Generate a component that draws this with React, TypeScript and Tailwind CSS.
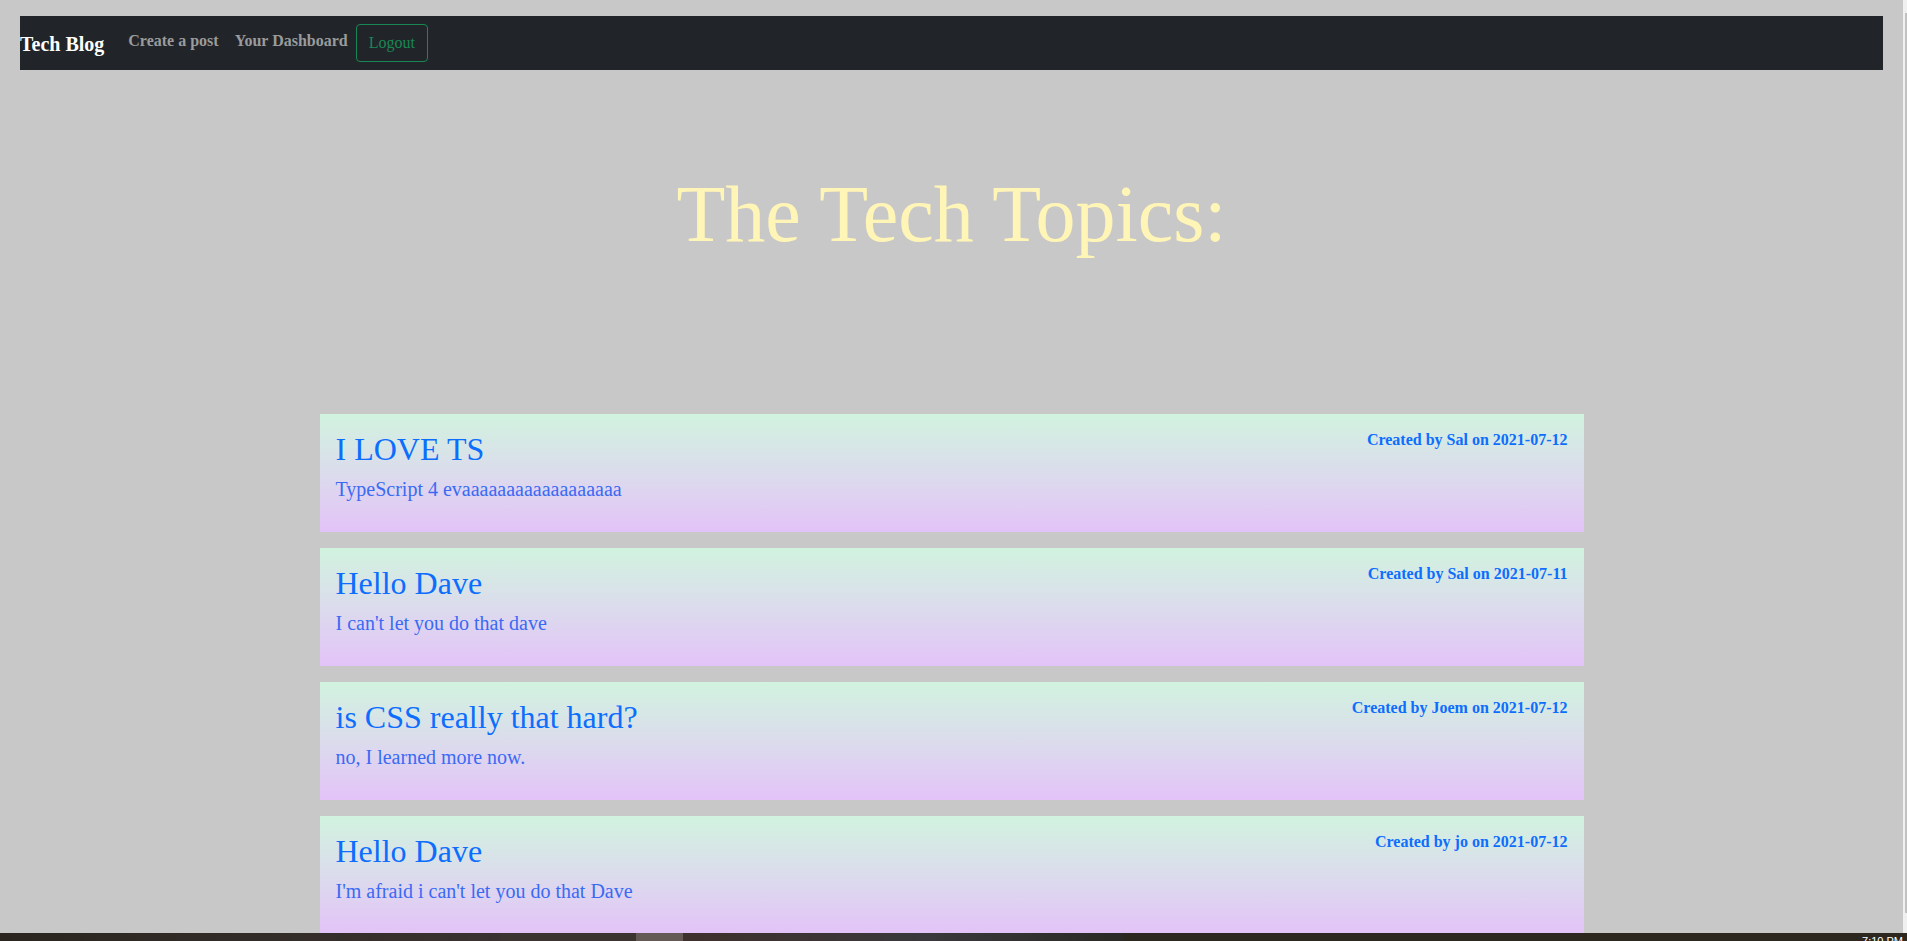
const posts = [
  {
    id: 1,
    title: "I LOVE TS",
    body: "TypeScript 4 evaaaaaaaaaaaaaaaaaa",
    author: "Sal",
    date: "2021-07-12",
  },
  {
    id: 2,
    title: "Hello Dave",
    body: "I can't let you do that dave",
    author: "Sal",
    date: "2021-07-11",
  },
  {
    id: 3,
    title: "is CSS really that hard?",
    body: "no, I learned more now.",
    author: "Joem",
    date: "2021-07-12",
  },
  {
    id: 4,
    title: "Hello Dave",
    body: "I'm afraid i can't let you do that Dave",
    author: "jo",
    date: "2021-07-12",
  },
  {
    id: 5,
    title: "Hello World",
    body: "first post",
    author: "jo",
    date: "2021-07-10",
  },
];

function Navbar() {
  return (
    <nav className="h-[54px] bg-[#212529] flex items-center">
      <a href="#" className="text-[20px] font-bold text-white leading-[30px] mr-4 mt-[1px]">
        Tech Blog
      </a>
      <a href="#" className="px-2 text-base font-bold text-[#9a9b9d] leading-6 -mt-[4px]">
        Create a post
      </a>
      <a href="#" className="px-2 text-base font-bold text-[#9a9b9d] leading-6 -mt-[4px]">
        Your Dashboard
      </a>
      <button className="px-3 py-1.5 text-base leading-6 text-[#198754] border border-[#198754] rounded">
        Logout
      </button>
    </nav>
  );
}

function PostCard({ post }: { post: (typeof posts)[number] }) {
  return (
    <div className="bg-gradient-to-b from-[#d1f3df] to-[#e3c3f8] px-4 pt-4 pb-[28px]">
      <div className="flex justify-between items-start">
        <h2 className="text-[32px] leading-[38px] text-[#0d6efd]">{post.title}</h2>
        <h6 className="text-base font-bold leading-[1.2] text-[#0d6efd]">
          Created by {post.author} on {post.date}
        </h6>
      </div>
      <p className="text-[20px] leading-[30px] text-[#3a6af4] mt-[6px]">{post.body}</p>
    </div>
  );
}

export default function App() {
  return (
    <div className="w-[1907px] h-[941px] flex flex-col overflow-hidden font-['Liberation_Serif',serif]">
      <div className="flex-1 flex min-h-0">
        <main className="w-[1903px] bg-[#c8c8c8] overflow-hidden pt-4 px-5">
          <Navbar />
          <h1 className="text-center text-[80px] leading-[1.2] text-[#fff5b6] mt-[96px]">
            The Tech Topics:
          </h1>
          <div className="w-[1264px] mx-auto mt-[152px] flex flex-col gap-4">
            {posts.map((p) => (
              <PostCard key={p.id} post={p} />
            ))}
          </div>
        </main>
        {/* fake scrollbar strip */}
        <div className="w-[4px] bg-[#f0f0f0] pt-[13px] flex justify-end">
          <div className="w-[2px] h-[900px] bg-[#c1c1c1]" />
        </div>
      </div>
      {/* taskbar edge */}
      <div className="h-[8px] flex bg-[#2c2820] overflow-hidden">
        <div className="w-[500px] bg-gradient-to-r from-[#2a261f] to-[#3a3230]" />
        <div className="w-[136px] bg-[#3b3431]" />
        <div className="w-[47px] bg-[#645954]" />
        <div className="w-[240px] bg-gradient-to-r from-[#3e302c] to-[#3a383c]" />
        <div className="w-[200px] bg-gradient-to-r from-[#3a383c] to-[#2c2a26]" />
        <div className="flex-1" />
        <span className="text-[11px] text-white leading-[11px] pr-1 pt-[3px] font-['Liberation_Sans',sans-serif]">
          7:10 PM
        </span>
      </div>
    </div>
  );
}
